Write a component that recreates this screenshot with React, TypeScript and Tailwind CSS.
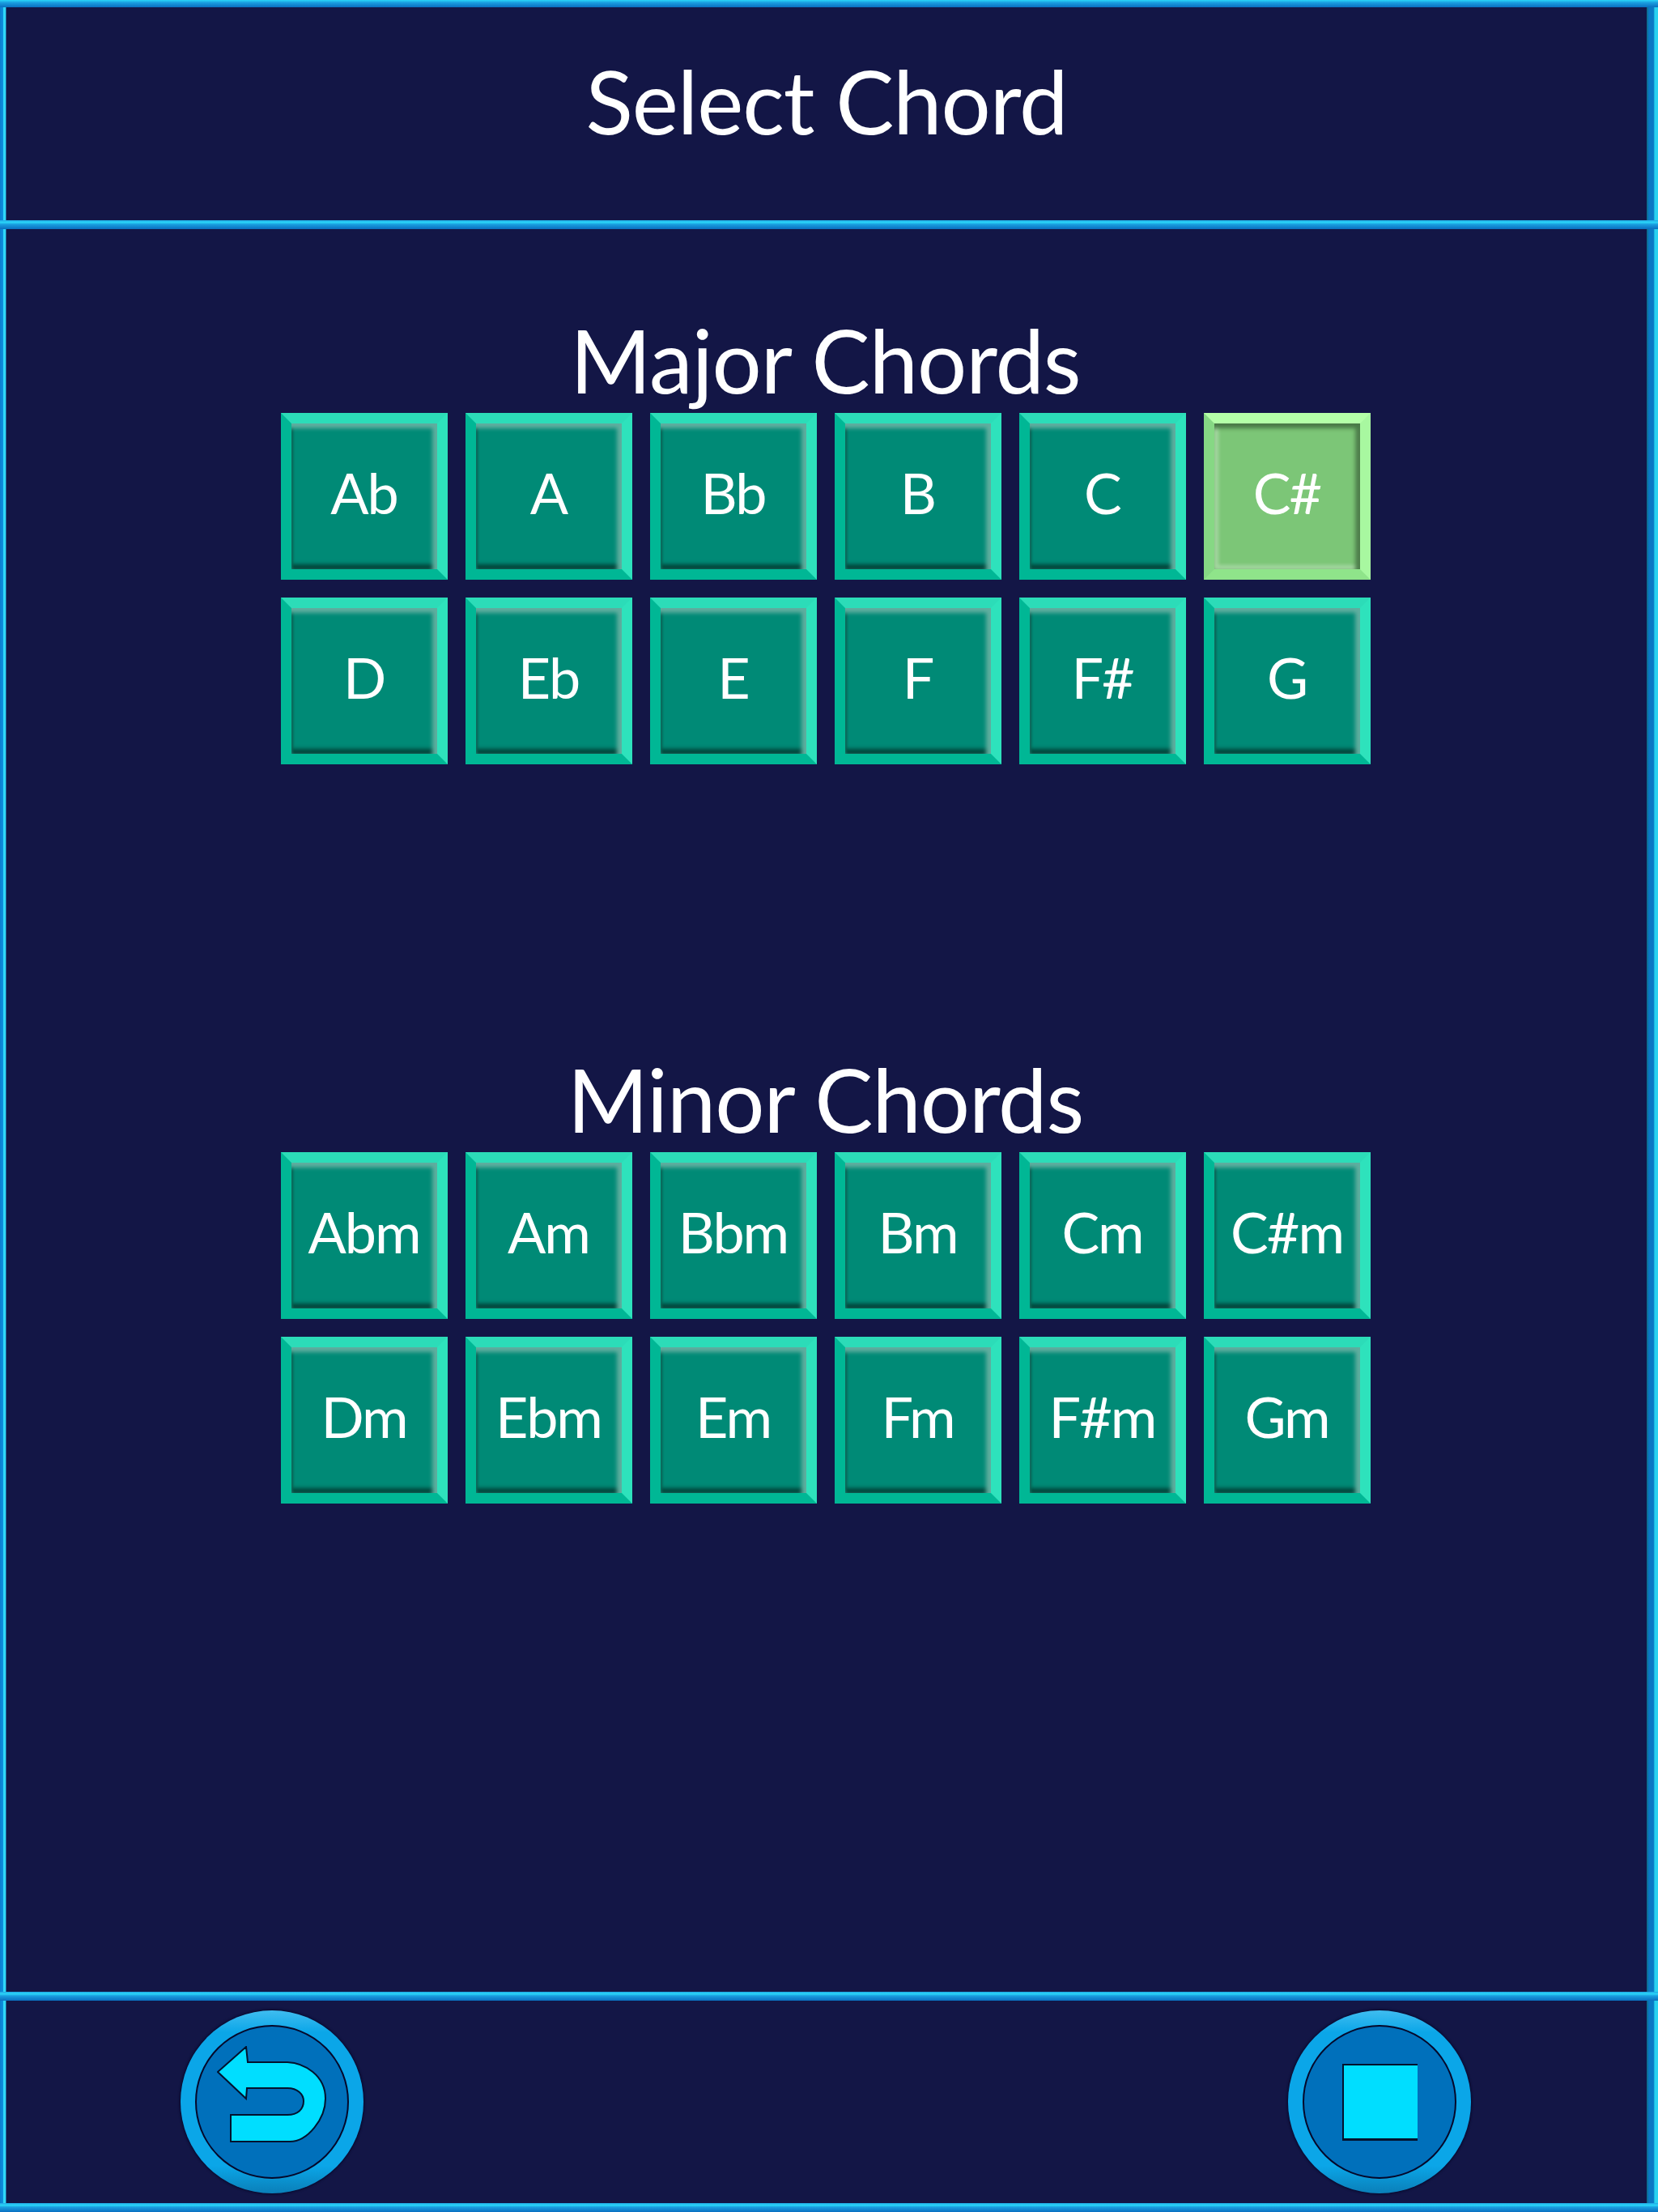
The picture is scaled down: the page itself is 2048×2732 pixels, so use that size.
import React from 'react';

const majorChords = ['Ab', 'A', 'Bb', 'B', 'C', 'C#', 'D', 'Eb', 'E', 'F', 'F#', 'G'];
const minorChords = ['Abm', 'Am', 'Bbm', 'Bm', 'Cm', 'C#m', 'Dm', 'Ebm', 'Em', 'Fm', 'F#m', 'Gm'];

const Band = () => (
  <div className="h-[11px] shrink-0 bg-[linear-gradient(to_bottom,#21a9e6_0%,#2ad6f8_25%,#1a9fe0_45%,#0a6fc0_100%)]" />
);

const SideLeft = () => (
  <div className="w-[8px] shrink-0 bg-[linear-gradient(to_right,#0a7fd0_0%,#0f8fdc_45%,#2fd8f8_55%,#2fd8f8_85%,#10104a_100%)]" />
);

const SideRight = () => (
  <div className="w-[14px] shrink-0 bg-[linear-gradient(to_right,#0b6a80_0%,#0a78c4_20%,#0a78c4_60%,#2ad2f0_72%,#2ad2f0_100%)]" />
);

const ChordButton = ({ label, active }: { label: string; active?: boolean }) => (
  <div
    className={
      active
        ? 'h-[206px] w-[206px] border-[13px] border-t-[#b4ffa8] border-r-[#a8f8a0] border-b-[#8fe48a] border-l-[#86d884]'
        : 'h-[206px] w-[206px] border-[13px] border-t-[#2cdcb8] border-r-[#2ee2bc] border-b-[#00b795] border-l-[#00b795]'
    }
  >
    <div
      className={
        active
          ? 'flex h-full w-full items-center justify-center bg-[#7cc677] pb-[10px] text-[70px] tracking-[-2px] text-white shadow-[inset_0_8px_5px_-2px_#4a7a48,inset_-8px_0_5px_-2px_#4f7f4d,inset_7px_0_4px_-2px_#a6d8a2,inset_0_-7px_4px_-2px_#a6d8a2]'
          : 'flex h-full w-full items-center justify-center bg-[#008a76] pb-[10px] text-[70px] tracking-[-2px] text-white shadow-[inset_0_8px_5px_-2px_#5fae9f,inset_-8px_0_5px_-2px_#5fae9f,inset_3px_0_3px_-1px_#00584b,inset_0_-8px_5px_-2px_#00443a]'
      }
    >
      {label}
    </div>
  </div>
);

const ChordGroup = ({ title, chords }: { title: string; chords: string[] }) => (
  <div className="flex flex-col items-center">
    <div className="flex h-[110px] items-start text-[108px] leading-[88px] tracking-[-1px] text-white">{title}</div>
    <div className="grid grid-cols-[repeat(6,206px)] gap-[22px]">
      {chords.map((c) => (
        <ChordButton key={c} label={c} active={c === 'C#'} />
      ))}
    </div>
  </div>
);

const RoundButton = ({ children }: { children: React.ReactNode }) => (
  <div className="flex h-[226px] w-[226px] items-center justify-center rounded-full bg-[linear-gradient(to_bottom,#3fbdf0_0%,#0ba6e8_12%,#0ba6e8_85%,#0a7fb8_100%)] shadow-[0_0_3px_1px_#05082a]">
    <div className="flex h-[190px] w-[190px] items-center justify-center rounded-full border-2 border-[#05082a] bg-[#0070bb]">
      {children}
    </div>
  </div>
);

const BackIcon = () => (
  <svg width="136" height="120" viewBox="0 0 136 120" className="mb-[18px]">
    <path
      d="M1 32 L36 1 L38 20 L87 20 C108 21 134 36 134 65 C134 90 112 118 90 118 L17 118 L17 85 L87 85 C100 85 107 78 107 68 C107 60 100 52 87 52 L37 52 L36 65 Z"
      fill="#00deff"
      stroke="#03122e"
      strokeWidth="2"
    />
  </svg>
);

export default function App() {
  return (
    <div
      className="flex h-[2732px] w-[2048px] flex-col bg-[#131646]"
      style={{ fontFamily: 'Lato, "Open Sans", sans-serif' }}
    >
      <div className="h-[9px] shrink-0 bg-[linear-gradient(to_bottom,#2ad6f8_0%,#1a9fe0_35%,#0a6fc0_100%)]" />
      <div className="flex h-[263px] shrink-0">
        <SideLeft />
        <div className="flex flex-1 items-center justify-center pb-[34px] text-[108px] tracking-[-1px] text-white">
          Select Chord
        </div>
        <SideRight />
      </div>
      <Band />
      <div className="flex flex-1">
        <SideLeft />
        <div className="flex flex-1 flex-col items-center gap-[369px] pt-[117px] pr-[3px]">
          <ChordGroup title="Major Chords" chords={majorChords} />
          <ChordGroup title="Minor Chords" chords={minorChords} />
        </div>
        <SideRight />
      </div>
      <Band />
      <div className="flex h-[250px] shrink-0">
        <SideLeft />
        <div className="flex flex-1 items-start justify-between pt-[12px] pr-[217px] pl-[215px]">
          <RoundButton>
            <BackIcon />
          </RoundButton>
          <RoundButton>
            <div className="h-[95px] w-[93px] border-t-2 border-b-[3px] border-l-2 border-t-[#03122e] border-b-[#03122e] border-l-[#03122e] bg-[#00deff]" />
          </RoundButton>
        </div>
        <SideRight />
      </div>
      <Band />
    </div>
  );
}
